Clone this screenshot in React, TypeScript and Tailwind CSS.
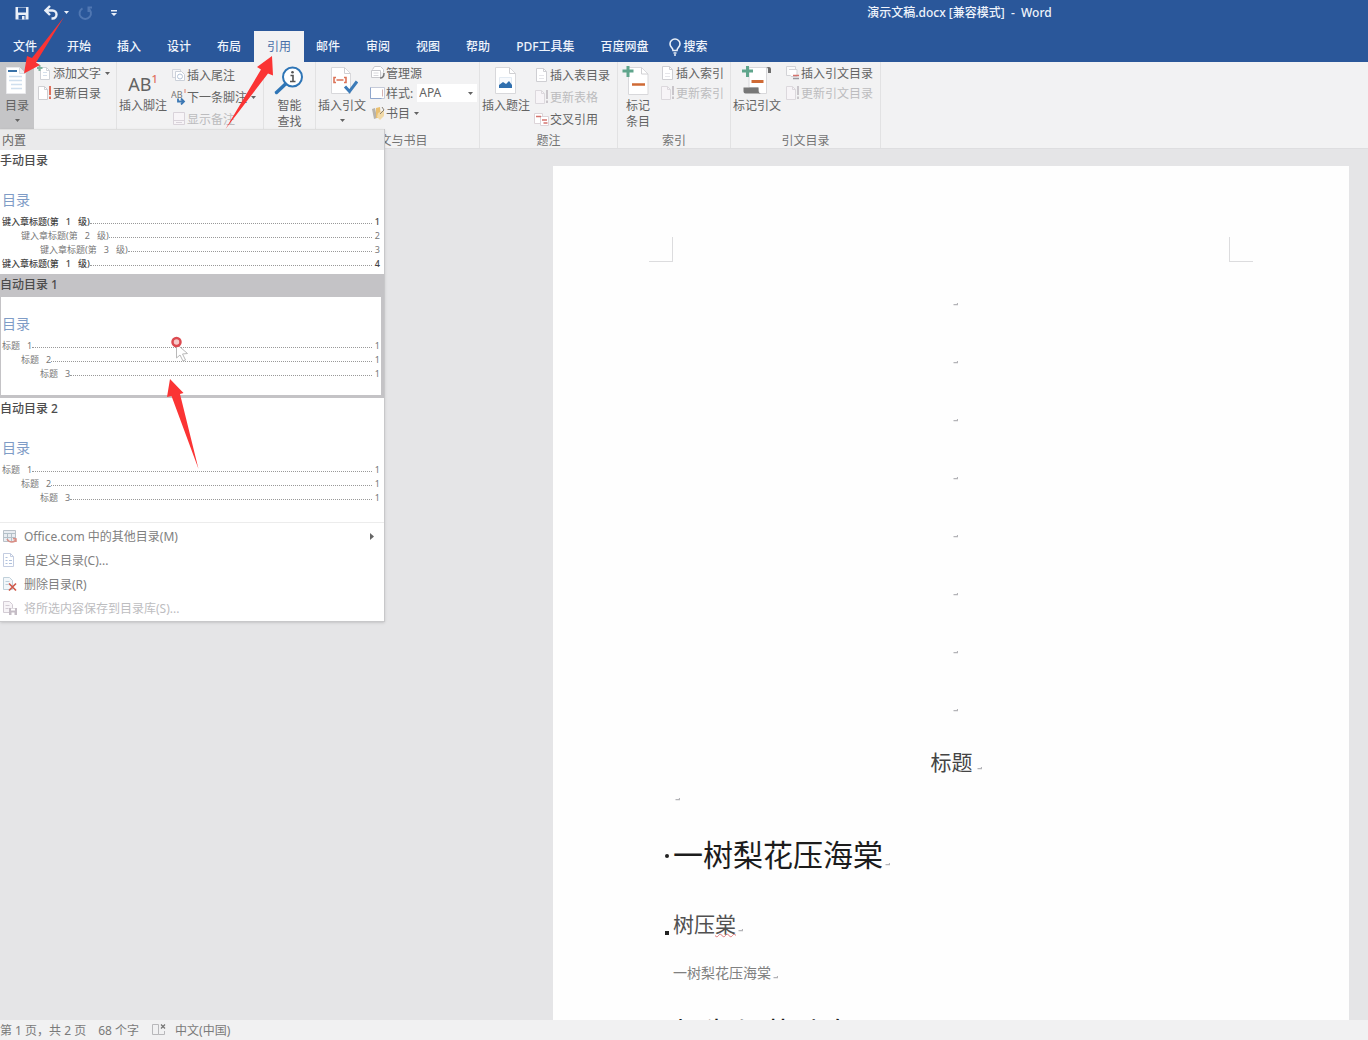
import type { ReactNode } from "react";

const UI = "font-['Noto_Sans','Noto_Sans_CJK_SC',sans-serif]";
const DOC = "font-['Liberation_Serif','Noto_Sans_CJK_SC',serif]";

/* ---------- icons ---------- */

function Caret({ className = "" }: { className?: string }) {
  return (
    <svg className={`h-[3px] w-[5px] shrink-0 ${className}`} viewBox="0 0 5 3" aria-hidden="true">
      <path d="M0 0h5L2.500 3z" fill="currentColor" />
    </svg>
  );
}

function Small({ children }: { children: ReactNode }) {
  return (
    <svg className="size-4 shrink-0" viewBox="0 0 16 16" fill="none" aria-hidden="true">
      {children}
    </svg>
  );
}

function Big({ children }: { children: ReactNode }) {
  return (
    <svg className="size-8 shrink-0" viewBox="0 0 32 32" fill="none" aria-hidden="true">
      {children}
    </svg>
  );
}

const AddTextIcon = () => (
  <Small>
    <path d="M3.500 2.500h6l3 3v9h-9z" fill="#fff" stroke="#cfd2d8" />
    <path d="M9.500 2.500v3h3" stroke="#cfd2d8" />
    <path d="M6 7.500h4M6 10.500h4" stroke="#d5e0ec" />
    <path d="M2.500 0v6M0 3h5.500" stroke="#7fb3a0" strokeWidth="2" />
  </Small>
);
const UpdateIcon = ({ muted = false }: { muted?: boolean }) => (
  <Small>
    <path d="M1.500 1.500h6l3 3v10h-9z" fill={muted ? "#f7f4f7" : "#fff"} stroke={muted ? "#dcd8dd" : "#cfcfd2"} />
    <path d="M7.500 1.500v3h3" stroke={muted ? "#dcd8dd" : "#cfcfd2"} />
    <path d="M13 1v9M13 11.500v2.500" stroke={muted ? "#c9c5ca" : "#e0705c"} strokeWidth="2" />
  </Small>
);
const EndnoteIcon = () => (
  <Small>
    <path d="M1.500 2.500h8v8h-8z" fill="#f7f7f9" stroke="#d2d5dc" />
    <path d="M4.500 4.500h6l3 3v6h-9z" fill="#fff" stroke="#cbd0d9" />
    <circle cx="9" cy="9.500" r="2.500" stroke="#b5c4d8" />
  </Small>
);
const NextFootnoteIcon = () => (
  <Small>
    <text x="0" y="9" fontSize="9" fill="#777" fontFamily="Noto Sans">AB</text>
    <path d="M14 0v4" stroke="#e0806f" />
    <path d="M7 9.500v3h5M10 9.500l3 3-3 3" stroke="#3c78b4" strokeWidth="1.800" />
  </Small>
);
const ShowNotesIcon = () => (
  <Small>
    <path d="M2.500 1.500h11v12h-11z" fill="#f7f4f7" stroke="#d9d3da" />
    <path d="M2.500 9.500h11M5 11.500h6" stroke="#d9d3da" />
  </Small>
);
const SourcesIcon = () => (
  <Small>
    <path d="M2.500 4.500l2-3h6l3 3v3" fill="#fff" stroke="#c8c8cc" />
    <path d="M1.500 5.500h9v7h-9z" fill="#fff" stroke="#c8c8cc" />
    <path d="M3.500 8h5M3.500 10.500h5" stroke="#d8d8dc" />
    <path d="M14 8c0 3-1 5-4 5" stroke="#777" strokeWidth="1.500" />
  </Small>
);
const StyleIcon = () => (
  <Small>
    <path d="M.500 2.500h14v11H.500z" fill="#fff" stroke="#c6cbd9" />
    <path d="M.500 2.500v11h11" stroke="#8fa6cc" />
    <path d="M12.500 4.500v7" stroke="#d7b3b3" />
  </Small>
);
const BibliographyIcon = () => (
  <Small>
    <path d="M2 4l3-1 2 10-3 1z" fill="#b7b3ab" />
    <path d="M6 3l4-1 1 11H6z" fill="#e9bf6f" />
    <path d="M8 8l6-3v6l-4 4-3-3z" fill="#f1d9a6" />
    <path d="M12 2l2 3-4 4" stroke="#8a8173" />
  </Small>
);
const PageIcon = () => (
  <Small>
    <path d="M2.500 1.500h7l3 3v10h-10z" fill="#fff" stroke="#cfcfd3" />
    <path d="M9.500 1.500v3h3" stroke="#cfcfd3" />
    <path d="M5 8.500h5M5 11.500h5" stroke="#e6e6ea" />
  </Small>
);
const CrossRefIcon = () => (
  <Small>
    <path d="M.500 2.500h8v10h-8z" fill="#fff" stroke="#dcd4d8" />
    <path d="M6.500 5.500h8v9h-8z" fill="#fff" stroke="#dcd4d8" />
    <path d="M2 5.500h5M8 9h5M9.500 12h4" stroke="#d5736d" strokeWidth="1.500" />
  </Small>
);
const AuthoritiesIcon = () => (
  <Small>
    <path d="M1.500 1.500h9v9h-9z" fill="#fafafa" stroke="#d3d3d7" />
    <path d="M4 4.500h8v7H6" fill="#fff" stroke="#d3d3d7" />
    <path d="M8 10.500h6" stroke="#d5736d" strokeWidth="1.500" />
    <path d="M8 13.500h6" stroke="#9a9aa0" strokeWidth="1.500" />
  </Small>
);

const TocIcon = () => (
  <Big>
    <path d="M5.500 1.500h13l6 6v20h-19z" fill="#fff" stroke="#e9e9ec" />
    <path d="M18.500 1.500v6h6" fill="#eef0f3" stroke="#dadde2" />
    <path d="M7 5h9" stroke="#3a72a8" strokeWidth="2" />
    <path d="M8 10.500h13M8 14.500h13M10 18.500h11M10 22.500h11" stroke="#cfdfee" strokeWidth="1.500" />
  </Big>
);
const LookupIcon = () => (
  <Big>
    <circle cx="18.500" cy="11" r="9.500" fill="#fff" stroke="#2e75b6" strokeWidth="2" />
    <path d="M11.500 18L2.500 26.500" stroke="#2e75b6" strokeWidth="3.500" strokeLinecap="round" />
    <path d="M16.500 9.500h2.500v6M16 15.500h5.500" stroke="#555" strokeWidth="1.600" />
    <circle cx="18.500" cy="6.300" r="1.300" fill="#555" />
  </Big>
);
const CitationIcon = () => (
  <Big>
    <path d="M5.500 1.500h13l6 6v20h-19z" fill="#fff" stroke="#d8d8db" />
    <path d="M18.500 1.500v6h6" stroke="#d0d0d3" />
    <path d="M10 11.500H8v5h2M18 11.500h2v5h-2M10.500 14h7" stroke="#dc7358" strokeWidth="1.600" />
    <path d="M19 20.500l4.500 5 7.500-10" stroke="#3c7bb8" strokeWidth="3" />
  </Big>
);
const CaptionIcon = () => (
  <Big>
    <path d="M5.500 1.500h14l6 6v20h-20z" fill="#fff" stroke="#d8d8db" />
    <path d="M19.500 1.500v6h6" stroke="#d0d0d3" />
    <path d="M9.500 11.500h12v10h-12z" fill="#f8fafd" stroke="#e3ebf3" />
    <path d="M9 22v-3l4-3 3 2 3-3 3 4v3z" fill="#2f6fae" />
  </Big>
);
const MarkEntryIcon = () => (
  <Big>
    <path d="M6.500 1.500h13l6.500 6.500v20.500H6.500z" fill="#fff" stroke="#d8d8db" />
    <path d="M19.500 1.500v6.500H26" stroke="#d0d0d3" />
    <path d="M10 18.500h13" stroke="#cf6a35" strokeWidth="2.500" />
    <path d="M6 0v11M.500 5h11" stroke="#5fa58c" strokeWidth="3" />
  </Big>
);
const MarkCitationIcon = () => (
  <Big>
    <path d="M8 1.500h17.500V27.500H18l-1-6H8z" fill="#fff" stroke="#d8d8db" />
    <path d="M25 1h3q2 0 2 2v4h-3V3q0-1.500-2-2z" fill="#6e6e6e" />
    <path d="M2.500 21.500h15v3.500q0 2 2.500 2.500H4.500q-2 0-2-2z" fill="#777" />
    <path d="M10.500 15.500h12" stroke="#cf6a35" strokeWidth="3" />
    <path d="M6.500 0v11M1 5h11" stroke="#5fa58c" strokeWidth="3" />
  </Big>
);

/* ---------- ribbon pieces ---------- */

function Group({ className, label, children }: { className: string; label?: string; children: ReactNode }) {
  return (
    <section className={`flex shrink-0 flex-col border-r border-[#e2e2e3] ${className}`}>
      <div className="flex h-[68px] shrink-0 items-start">{children}</div>
      <h2 className="text-center text-xs leading-[22px] text-[#747474]">{label}</h2>
    </section>
  );
}

function BigButton({ icon, lines, caret, className }: { icon: ReactNode; lines: string[]; caret?: boolean; className: string }) {
  return (
    <button type="button" className={`flex h-[67px] shrink-0 flex-col items-center pt-1 leading-4 whitespace-nowrap ${className}`}>
      {icon}
      {lines.map((l) => (
        <span key={l}>{l}</span>
      ))}
      {caret && <Caret className="mt-[5px]" />}
    </button>
  );
}

function SmallButton({ icon, text, caret, disabled, tall }: { icon: ReactNode; text: string; caret?: boolean; disabled?: boolean; tall?: boolean }) {
  return (
    <button
      type="button"
      disabled={disabled}
      className={`flex items-center whitespace-nowrap disabled:text-[#bcbcbe] ${tall ? "h-[22px]" : "h-5"}`}
    >
      {icon}
      <span className="pt-0.5">{text}</span>
      {caret && <Caret className="ml-1" />}
    </button>
  );
}

function Ribbon() {
  return (
    <div className="flex h-[87px] shrink-0 overflow-hidden border-b border-[#dedee0] bg-[#f2f2f3] text-xs text-[#636363]">
      <Group className="w-[117px]">
        <BigButton className="mr-[3px] w-[34px] bg-[#c5c5c7]" icon={<TocIcon />} lines={["目录"]} caret />
        <div className="flex flex-col pt-px">
          <SmallButton icon={<AddTextIcon />} text="添加文字" caret />
          <SmallButton icon={<UpdateIcon />} text="更新目录" />
        </div>
      </Group>
      <Group className="w-[147px]">
        <BigButton
          className="mr-1 ml-0.5 w-12"
          icon={
            <span className="flex h-8 items-center pt-1 text-lg leading-8 text-[#636363]">
              AB<sup className="text-[11px] font-medium text-[#e0705c]">1</sup>
            </span>
          }
          lines={["插入脚注"]}
        />
        <div className="flex flex-col pt-0.5">
          <SmallButton tall icon={<EndnoteIcon />} text="插入尾注" />
          <SmallButton tall icon={<NextFootnoteIcon />} text="下一条脚注" caret />
          <SmallButton tall icon={<ShowNotesIcon />} text="显示备注" disabled />
        </div>
      </Group>
      <Group className="w-[52px]">
        <BigButton className="w-[51px]" icon={<LookupIcon />} lines={["智能", "查找"]} />
      </Group>
      <Group className="w-[164px]" label="引文与书目">
        <BigButton className="mr-1 ml-0.5 w-12" icon={<CitationIcon />} lines={["插入引文"]} caret />
        <div className="flex flex-col pt-px">
          <SmallButton icon={<SourcesIcon />} text="管理源" />
          <div className="flex h-5 items-center">
            <StyleIcon />
            <label htmlFor="cite-style" className="pt-0.5">样式:</label>
            <span className="ml-1 flex h-[18px] w-[60px] items-center bg-white pr-1">
              <select id="cite-style" className="min-w-0 flex-1 appearance-none bg-transparent pl-0.5 leading-[18px] outline-none">
                <option>APA</option>
              </select>
              <Caret />
            </span>
          </div>
          <SmallButton icon={<BibliographyIcon />} text="书目" caret />
        </div>
      </Group>
      <Group className="w-[138px]" label="题注">
        <BigButton className="mr-1 ml-0.5 w-12" icon={<CaptionIcon />} lines={["插入题注"]} />
        <div className="flex flex-col pt-0.5">
          <SmallButton tall icon={<PageIcon />} text="插入表目录" />
          <SmallButton tall icon={<UpdateIcon muted />} text="更新表格" disabled />
          <SmallButton tall icon={<CrossRefIcon />} text="交叉引用" />
        </div>
      </Group>
      <Group className="w-[113px]" label="索引">
        <BigButton className="mr-0.5 w-10" icon={<MarkEntryIcon />} lines={["标记", "条目"]} />
        <div className="flex flex-col pt-px">
          <SmallButton icon={<PageIcon />} text="插入索引" />
          <SmallButton icon={<UpdateIcon muted />} text="更新索引" disabled />
        </div>
      </Group>
      <Group className="w-[150px]" label="引文目录">
        <BigButton className="mr-1 ml-0.5 w-12" icon={<MarkCitationIcon />} lines={["标记引文"]} />
        <div className="flex flex-col pt-px">
          <SmallButton icon={<AuthoritiesIcon />} text="插入引文目录" />
          <SmallButton icon={<UpdateIcon muted />} text="更新引文目录" disabled />
        </div>
      </Group>
    </div>
  );
}

/* ---------- title bar and tabs ---------- */

const tabs = ["开始", "插入", "设计", "布局", "引用", "邮件", "审阅", "视图", "帮助", "PDF工具集", "百度网盘"];

function Header() {
  return (
    <header className="shrink-0 bg-[#2a579a] text-xs font-medium text-[#eef3fb]">
      <div className="flex h-[31px] items-start">
        <div className="flex h-[25px] w-[551px] items-center pl-3.5">
          <button type="button" aria-label="保存" className="mr-3.5">
            <svg className="size-4" viewBox="0 0 16 16" aria-hidden="true">
              <path d="M1.500 2h13v12.500h-13z" fill="#e9eff8" />
              <path d="M4 2.500h8v5H4z" fill="#2a579a" />
              <path d="M4.500 10h7v4.500h-7z" fill="#2a579a" />
              <path d="M8 11h2.500v3.500H8z" fill="#e9eff8" />
            </svg>
          </button>
          <button type="button" aria-label="撤消" className="mr-2 flex items-center gap-1">
            <svg className="size-4" viewBox="0 0 16 16" fill="none" aria-hidden="true">
              <path d="M2 5.500h6.500a4 4 0 0 1 0 8H7.500M6 1L1.500 5.500 6 10" stroke="#e9eff8" strokeWidth="2.400" />
            </svg>
            <Caret />
          </button>
          <button type="button" aria-label="恢复" className="mr-[18px]">
            <svg className="size-4" viewBox="0 0 16 16" fill="none" aria-hidden="true">
              <path d="M5.500 3.300A5.700 5.700 0 1 0 11 3.300M11.500 7V2.500H15" stroke="#5077b2" strokeWidth="2" />
            </svg>
          </button>
          <button type="button" aria-label="自定义快速访问工具栏">
            <svg className="h-2 w-1.5" viewBox="0 0 6 8" aria-hidden="true">
              <path d="M0 1h6v1.500H0zM0 4h6L3 7z" fill="#e9eff8" />
            </svg>
          </button>
        </div>
        <h1 className="flex-1 text-center leading-[25px] whitespace-pre">演示文稿.docx [兼容模式]  -  Word</h1>
      </div>
      <nav className="flex h-[31px] leading-[31px]">
        <button type="button" className="mr-1 w-[50px]">文件</button>
        {tabs.map((t) => (
          <button
            key={t}
            type="button"
            className={t === "引用" ? "-mr-px w-[50px] bg-[#f2f2f3] font-normal text-[#4a6fa8]" : "px-[13px] whitespace-nowrap"}
          >
            {t}
          </button>
        ))}
        <button type="button" className="ml-1.5 flex items-center gap-0.5">
          <svg className="h-[18px] w-3.5" viewBox="0 0 14 18" fill="none" aria-hidden="true">
            <path d="M5 12.500c0-2.500-3-3.500-3-6.500a5 5 0 0 1 10 0c0 3-3 4-3 6.500zM5.500 15h3M6 17h2" stroke="#e9eff8" strokeWidth="1.600" />
          </svg>
          搜索
        </button>
      </nav>
    </header>
  );
}

/* ---------- table-of-contents gallery ---------- */

type Row = { text: string; num: string; level: number; bold?: boolean };

const manualRows: Row[] = [
  { text: "键入章标题(第   1   级)", num: "1", level: 1, bold: true },
  { text: "键入章标题(第   2   级)", num: "2", level: 2 },
  { text: "键入章标题(第   3   级)", num: "3", level: 3 },
  { text: "键入章标题(第   1   级)", num: "4", level: 1, bold: true },
];
const autoRows: Row[] = [
  { text: "标题   1", num: "1", level: 1 },
  { text: "标题   2", num: "1", level: 2 },
  { text: "标题   3", num: "1", level: 3 },
];
const indent: Record<number, string> = { 1: "pl-0", 2: "pl-[19px]", 3: "pl-[38px]" };

function GalleryItem({ title, rows, active }: { title: string; rows: Row[]; active?: boolean }) {
  return (
    <button type="button" className={`flex h-[124px] w-full flex-col text-left ${active ? "bg-[#c4c3c6]" : "bg-white"}`}>
      <span className="h-[23px] text-xs leading-[22px] font-medium text-[#4c4c4c]">{title}</span>
      <span
        className={`flex flex-1 flex-col self-stretch pt-[17px] ${active ? "mr-[3px] mb-[3px] ml-px bg-white pr-px pl-px" : "pr-1 pl-0.5"}`}
      >
        <span className="mb-[5px] text-sm leading-5 text-[#7f9cc6]">目录</span>
        {rows.map((r, i) => (
          <span
            key={i}
            className={`flex h-3.5 text-[9px] leading-[14px] whitespace-pre ${indent[r.level]} ${r.bold ? "font-medium text-[#444]" : "text-[#777]"}`}
          >
            {r.text}
            <span className="mr-[3px] mb-[5px] flex-1 border-b border-dotted border-[#999]" />
            {r.num}
          </span>
        ))}
      </span>
    </button>
  );
}

function MenuItem({ icon, text, arrow, disabled }: { icon: ReactNode; text: string; arrow?: boolean; disabled?: boolean }) {
  return (
    <button type="button" disabled={disabled} className="flex h-6 w-full items-center pr-2.5 pl-0.5 text-[#808080] disabled:text-[#bdbdbf]">
      {icon}
      <span className="ml-1.5 flex-1 pt-0.5 text-left">{text}</span>
      {arrow && (
        <svg className="h-[7px] w-1" viewBox="0 0 4 7" aria-hidden="true">
          <path d="M0 0l4 3.500L0 7z" fill="#666" />
        </svg>
      )}
    </button>
  );
}

function TocMenu() {
  return (
    <div className="absolute top-[129px] left-0 w-[385px] border-r border-b border-[#c8c8ca] bg-white text-xs shadow-sm">
      <div className="h-[21px] border-t border-[#dedede] bg-[#eaeaeb] pl-0.5 leading-[22px] text-[#666]">内置</div>
      <GalleryItem title="手动目录" rows={manualRows} />
      <GalleryItem title="自动目录 1" rows={autoRows} active />
      <GalleryItem title="自动目录 2" rows={autoRows} />
      <div className="border-t border-[#ececec] pt-px pb-px">
        <MenuItem
          arrow
          text="Office.com 中的其他目录(M)"
          icon={
            <Small>
              <path d="M1.500 2.500h12v11h-12z" fill="#e9edf1" stroke="#b9c1c8" />
              <path d="M1.500 5.500h12M5.500 5.500v8M9.500 5.500v8M1.500 9.500h12" stroke="#b3c0c8" />
              <path d="M5 11c2 4 8 4 9 0M11 10.500l3 .500v3" stroke="#d98f86" strokeWidth="1.500" />
            </Small>
          }
        />
        <MenuItem
          text="自定义目录(C)..."
          icon={
            <Small>
              <path d="M1.500 1.500h7l3 3v10h-10z" fill="#fff" stroke="#c3cce0" />
              <path d="M8.500 1.500v3h3" stroke="#c3cce0" />
              <path d="M3.500 5.500h2M3.500 8.500h2M3.500 11.500h2M7 8.500h3M7 11.500h3" stroke="#b0c1dd" />
            </Small>
          }
        />
        <MenuItem
          text="删除目录(R)"
          icon={
            <Small>
              <path d="M1.500 1.500h6l3 3v9h-9z" fill="#f3f7fa" stroke="#c0d0da" />
              <path d="M3.500 5.500h4M3.500 8.500h3" stroke="#bccfdc" />
              <path d="M7 7.500l7 7M14 7.500l-7 7" stroke="#cf5a4c" strokeWidth="1.700" />
            </Small>
          }
        />
        <MenuItem
          disabled
          text="将所选内容保存到目录库(S)..."
          icon={
            <Small>
              <path d="M1.500 1.500h6l3 3v8h-9z" fill="#f7f4f7" stroke="#d3ccd4" />
              <path d="M3.500 5.500h4M3.500 8.500h3" stroke="#d3ccd4" />
              <path d="M7 8h8v7H7z" fill="#c4bcc5" />
              <path d="M9 8.500h4v2H9zM9.500 12.500h3V15h-3z" fill="#fff" />
            </Small>
          }
        />
      </div>
    </div>
  );
}

/* ---------- document ---------- */

function Mark({ className = "" }: { className?: string }) {
  return (
    <svg className={`inline-block h-[3px] w-[5px] shrink-0 ${className}`} viewBox="0 0 5 3" fill="none" aria-hidden="true">
      <path d="M4.500 0v1.700H.500" stroke="#b4b4b8" strokeWidth="1.200" />
    </svg>
  );
}

function Document() {
  return (
    <main className="flex min-h-0 flex-1 justify-end overflow-hidden bg-[#e5e5e7] pt-[17px] pr-[19px]">
      <article className={`w-[796px] overflow-hidden bg-[#fefefe] px-24 pt-[71px] whitespace-nowrap ${DOC}`}>
        <div className="flex justify-between">
          <span className="h-[25px] w-6 border-r border-b border-[#dcdcde]" />
          <span className="h-[25px] w-6 border-b border-l border-[#dcdcde]" />
        </div>
        <div className="px-6">
          <div className="flex flex-col items-center pt-[13px] pl-2">
            {Array.from({ length: 8 }, (_, i) => (
              <p key={i} className="flex h-[58px] items-center">
                <Mark />
              </p>
            ))}
          </div>
          <h2 className="flex h-12 items-center justify-center pl-2.5 text-[21px] leading-[48px] text-[#444]">
            标题
            <Mark className="mt-2.5 ml-1" />
          </h2>
          <p className="flex h-[25px] items-center pl-0.5">
            <Mark />
          </p>
          <h3 className="-ml-2 flex h-[88px] items-center text-[30px] leading-[88px] text-[#1c1c1c]">
            <span className="mr-1 size-1 rounded-full bg-[#222]" />
            一树梨花压海棠
            <Mark className="mt-4 ml-0.5" />
          </h3>
          <h4 className="-ml-2 flex h-[50px] items-center text-[21px] leading-[30px] text-[#505050]">
            <span className="mt-4 mr-1 size-1 bg-[#222]" />
            树压
            <span className="underline decoration-[#e07878] decoration-wavy decoration-1 underline-offset-1">棠</span>
            <Mark className="mt-2.5 ml-0.5" />
          </h4>
          <p className="flex h-12 items-center text-sm leading-[48px] text-[#808080]">
            一树梨花压海棠
            <Mark className="mt-1.5 ml-0.5" />
          </p>
          <h3 className="pt-4 text-[30px] leading-[40px] text-[#1c1c1c]">相为与花动春</h3>
        </div>
      </article>
    </main>
  );
}

function StatusBar() {
  return (
    <footer className="flex h-5 shrink-0 items-center bg-[#f1f1f2] pt-0.5 text-xs leading-[22px] text-[#7a7a7a]">
      <span className="mr-3">第 1 页，共 2 页</span>
      <span className="mr-3">68 个字</span>
      <button type="button" aria-label="校对" className="mr-2">
        <svg className="block h-4 w-4" viewBox="0 0 16 16" fill="none" aria-hidden="true">
          <path d="M1.500 1.500h6v10h-6zM7.500 11.500h6V8" stroke="#b8b8bb" />
          <path d="M10 1.500l4 4M14 1.500l-4 4" stroke="#777" strokeWidth="1.300" />
        </svg>
      </button>
      <button type="button">中文(中国)</button>
    </footer>
  );
}

function Annotations() {
  return (
    <svg className="pointer-events-none absolute top-0 left-0 h-[480px] w-[290px]" viewBox="0 0 290 480" aria-hidden="true">
      <path d="M176.500 344v14l3.500-3 3 6 2.500-1-3-6 5-.500z" fill="#fff" stroke="#b9b9b9" />
      <circle cx="176.500" cy="342" r="4" fill="#f6c9c9" stroke="#dc4a50" strokeWidth="2.500" />
      <g fill="#fb3434">
        <path d="M64 17L32 58l-5-2-3 17.500L40 65l-4-2.500z" />
        <path d="M272 56l-15 11 4 2.500L225.500 129 268 73.500l5 2z" />
        <path d="M170 379l-3 18 4.500-1L198.500 469 180 394l3.500-1z" />
      </g>
    </svg>
  );
}

export default function App() {
  return (
    <div className={`relative flex h-screen flex-col overflow-hidden ${UI}`}>
      <Header />
      <Ribbon />
      <Document />
      <StatusBar />
      <TocMenu />
      <Annotations />
    </div>
  );
}
